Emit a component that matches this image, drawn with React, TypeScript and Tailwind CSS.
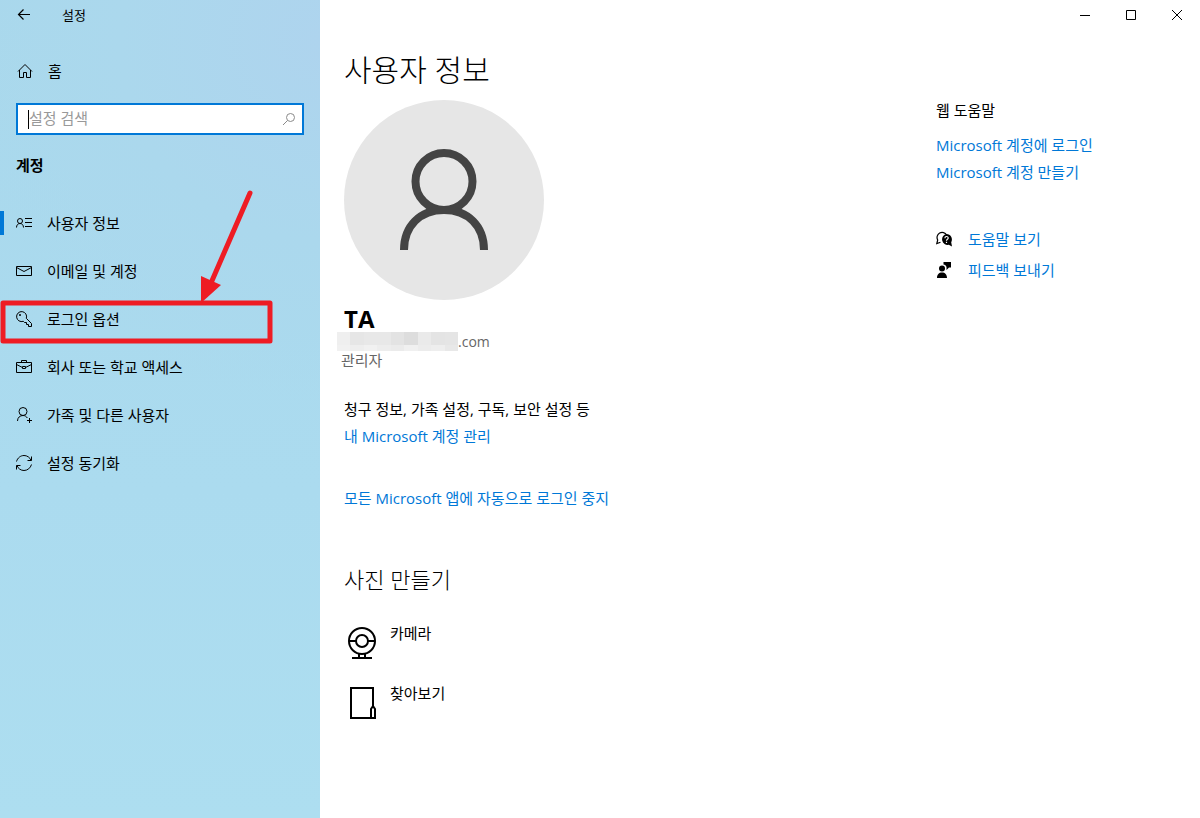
import React from 'react';

type IconProps = { className?: string };

const stroke = { fill: 'none', stroke: 'currentColor', strokeWidth: 1 } as const;

function PersonCardIcon({ className }: IconProps) {
  return (
    <svg className={className} viewBox="0 0 16 16" {...stroke} aria-hidden="true">
      <circle cx="4" cy="6" r="2.5" />
      <path d="M0.5 12.5C0.5 10 2 8.5 4 8.5S7.5 10 7.5 12.5M9 3.5h7M9 7.5h7M9 11.5h7" />
    </svg>
  );
}

function MailIcon({ className }: IconProps) {
  return (
    <svg className={className} viewBox="0 0 16 16" {...stroke} aria-hidden="true">
      <path d="M0.5 3.5h15v9h-15zM0.5 4.5L8 8.5l7.5-4" />
    </svg>
  );
}

function KeyIcon({ className }: IconProps) {
  return (
    <svg className={className} viewBox="0 0 16 16" {...stroke} aria-hidden="true">
      <path d="M10.3 7.3L15.5 12.5v3h-3v-2h-2v-2h-2L7.3 10.3A5 5 0 1 1 10.3 7.3z" />
      <circle cx="4" cy="4" r="0.6" fill="currentColor" />
    </svg>
  );
}

function BriefcaseIcon({ className }: IconProps) {
  return (
    <svg className={className} viewBox="0 0 16 16" {...stroke} aria-hidden="true">
      <path d="M0.5 3.5h15v10h-15zM5.5 3.5v-2h5v2M0.5 5.5L6.5 8.5M9.5 8.5L15.5 5.5M6.5 7.5h3v2h-3z" />
    </svg>
  );
}

function PersonAddIcon({ className }: IconProps) {
  return (
    <svg className={className} viewBox="0 0 16 16" {...stroke} aria-hidden="true">
      <circle cx="7" cy="4.5" r="4" />
      <path d="M1.5 14C1.5 10.5 4 8.5 7 8.5c2 0 3.500 1 4.300 2.500M13.500 11v5M11 13.500h5" />
    </svg>
  );
}

function SyncIcon({ className }: IconProps) {
  return (
    <svg className={className} viewBox="0 0 16 16" {...stroke} aria-hidden="true">
      <path d="M0.500 6.500C1.500 3 4.500 .5 8 .5c3.200 0 5.900 2 7 4.800M15.500 1.500v4h-4M15.500 9.500C14.500 13 11.500 15.500 8 15.500c-3.200 0-5.900-2-7-4.800M0.500 14.500v-4h4" />
    </svg>
  );
}

function HomeIcon({ className }: IconProps) {
  return (
    <svg className={className} viewBox="0 0 16 16" {...stroke} aria-hidden="true">
      <path d="M1 8.500L8 1.500l7 7M2.500 7v7.500h4v-5h3v5h4V7" />
    </svg>
  );
}

function SearchIcon({ className }: IconProps) {
  return (
    <svg className={className} viewBox="0 0 16 16" {...stroke} aria-hidden="true">
      <circle cx="9.500" cy="6.500" r="4" />
      <path d="M6.500 9.500L2 14" />
    </svg>
  );
}

function HelpIcon({ className }: IconProps) {
  return (
    <svg className={className} viewBox="0 0 16 16" aria-hidden="true">
      <path d="M4.500 11.200L0.800 12.500 1.700 9A5 5 0 1 1 10.600 4" fill="none" stroke="currentColor" strokeWidth="1.200" />
      <path d="M10.500 3a5.500 5.500 0 0 1 4.700 8.200l.8 4.300-3.300-1.700A5.500 5.500 0 1 1 10.500 3z" fill="currentColor" />
      <path d="M8.900 7.200c0-2.200 3.300-2.200 3.300-.2 0 1.300-1.700 1.300-1.700 2.700M10.500 10.700v1.200" fill="none" stroke="white" strokeWidth="1.200" />
    </svg>
  );
}

function FeedbackIcon({ className }: IconProps) {
  return (
    <svg className={className} viewBox="0 0 16 16" fill="currentColor" aria-hidden="true">
      <circle cx="6" cy="6.500" r="3" />
      <path d="M1 16c0-3.500 2-5.500 5-5.500s5 2 5 5.500zM7.500 0H15v5.500h-2L10.500 8V5C10 3.500 9 2.700 7.500 2.500z" />
    </svg>
  );
}

function WebcamIcon({ className }: IconProps) {
  return (
    <svg className={className} viewBox="0 0 32 32" fill="none" stroke="currentColor" strokeWidth="2" aria-hidden="true">
      <circle cx="16" cy="14" r="13" />
      <circle cx="16" cy="14" r="6" />
      <path d="M3 14h7M22 14h7M13 27v4M19 27v4M6 31h20" />
    </svg>
  );
}

function BrowseIcon({ className }: IconProps) {
  return (
    <svg className={className} viewBox="0 0 32 32" fill="none" stroke="currentColor" strokeWidth="2" aria-hidden="true">
      <path d="M25 31H5V1h22v19M25 31v-9l2-3 2 3v9z" />
    </svg>
  );
}

const navItems = [
  { label: '사용자 정보', Icon: PersonCardIcon },
  { label: '이메일 및 계정', Icon: MailIcon },
  { label: '로그인 옵션', Icon: KeyIcon },
  { label: '회사 또는 학교 액세스', Icon: BriefcaseIcon },
  { label: '가족 및 다른 사용자', Icon: PersonAddIcon },
  { label: '설정 동기화', Icon: SyncIcon },
];

const mosaic = [
  'bg-[#efefef]', 'bg-[#e6e6e6]', 'bg-[#e8e8e8]', 'bg-[#e8e8e8]', 'bg-[#e3e3e3]',
  'bg-[#dddddd]', 'bg-[#eaeaea]', 'bg-[#e4e4e4]', 'bg-[#e5e5e5]',
  'bg-[#f1f1f1]', 'bg-[#eeeeee]', 'bg-[#f1f1f1]', 'bg-[#ededed]', 'bg-[#ebebeb]',
  'bg-[#f0f0f0]', 'bg-[#ececec]', 'bg-[#eeeeee]', 'bg-[#e8e8e8]',
];

function Sidebar() {
  return (
    <aside className="relative w-80 shrink-0 bg-[#abdaee] bg-[radial-gradient(circle_at_100%_5%,#aed4ee_0%,#abd8ed_200px,transparent_360px),linear-gradient(to_bottom,#a9d8ec,#abdbef_60%,#addef0)]">
      <header className="flex h-[30px] items-center">
        <button type="button" aria-label="뒤로" className="flex h-[30px] w-12 items-center justify-center">
          <svg className="h-4 w-4" viewBox="0 0 16 16" {...stroke} strokeWidth="1.200" aria-hidden="true">
            <path d="M14 7.500H2.500M7.500 2.500l-5 5 5 5" />
          </svg>
        </button>
        <span className="pl-[14px] text-[13px]">설정</span>
      </header>
      <a href="#home" className="mt-[25px] flex h-8 items-center gap-[15px] pl-[17px]">
        <HomeIcon className="h-4 w-4" />
        <span>홈</span>
      </a>
      <div className="mx-4 mt-4 flex h-8 items-center border-2 border-[#0078d7] bg-white pl-[10px] pr-[5px]">
        <span className="h-[19px] w-px bg-black" />
        <input type="text" aria-label="설정 검색" placeholder="설정 검색" className="min-w-0 flex-1 bg-transparent pb-[2px] outline-none placeholder:text-[#999999]" />
        <SearchIcon className="h-4 w-4 text-[#8a8a8a]" />
      </div>
      <h2 className="mt-[18px] pl-4 leading-6 font-bold">계정</h2>
      <nav className="mt-[22px]">
        <ul>
          {navItems.map(({ label, Icon }, index) => (
            <li key={label}>
              <a href={`#section-${index}`} aria-current={index === 0 ? 'page' : undefined} className="flex h-12 items-center">
                <span className={index === 0 ? 'h-6 w-1 bg-[#0078d7]' : 'h-6 w-1'} />
                <Icon className="ml-3 h-4 w-4" />
                <span className="ml-[15px]">{label}</span>
              </a>
            </li>
          ))}
        </ul>
      </nav>
      <svg className="pointer-events-none absolute top-[184px] left-0 h-[164px] w-[280px]" viewBox="0 0 280 164" aria-hidden="true">
        <rect x="3" y="119" width="267" height="38" fill="none" stroke="#ee1c24" strokeWidth="5" strokeLinejoin="round" />
        <path d="M250 9L211 99" stroke="#ee1c24" strokeWidth="5" strokeLinecap="round" />
        <path d="M201 92L221 101L201 119z" fill="#ee1c24" />
      </svg>
    </aside>
  );
}

export default function App() {
  return (
    <div className="flex min-h-screen bg-white font-['Open_Sans','Noto_Sans_CJK_KR',sans-serif] text-[15px] leading-5 text-black">
      <Sidebar />
      <div className="flex min-w-0 flex-1 flex-col">
        <header className="flex h-[30px] justify-end">
          <button type="button" aria-label="최소화" className="flex w-[46px] items-center justify-center">
            <svg className="h-[10px] w-[10px]" viewBox="0 0 10 10" {...stroke}><path d="M0 5.500h10" /></svg>
          </button>
          <button type="button" aria-label="최대화" className="flex w-[46px] items-center justify-center">
            <svg className="h-[10px] w-[10px]" viewBox="0 0 10 10" {...stroke}><path d="M0.500 .5h9v9h-9z" /></svg>
          </button>
          <button type="button" aria-label="닫기" className="flex w-[46px] items-center justify-center">
            <svg className="h-[10px] w-[10px]" viewBox="0 0 10 10" {...stroke}><path d="M0 0l10 10M10 0L0 10" /></svg>
          </button>
        </header>
        <div className="flex flex-1 justify-between pl-6">
          <main className="pt-5">
            <h1 className="text-[30px] leading-10 font-light">사용자 정보</h1>
            <svg className="mt-[10px] h-[200px] w-[200px]" viewBox="0 0 200 200" role="img" aria-label="프로필 사진">
              <circle cx="100" cy="100" r="100" fill="#e6e6e6" />
              <g fill="none" stroke="#444444" strokeWidth="8">
                <circle cx="100" cy="81.500" r="28.500" />
                <path d="M60 150C60 126 76 110 100 110s40 16 40 40" />
              </g>
            </svg>
            <p className="mt-[6px] text-2xl leading-[26px] font-bold">TA</p>
            <div className="-ml-[7px] flex h-5 items-start text-[#666666]">
              <span className="grid h-[19px] w-[121px] grid-cols-9 grid-rows-[13px_6px]">
                {mosaic.map((tone, index) => <span key={index} className={tone} />)}
              </span>
              <span className="text-sm leading-5">.com</span>
            </div>
            <p className="-ml-[3px] leading-4 text-[#666666]">관리자</p>
            <p className="mt-[31px]">청구 정보, 가족 설정, 구독, 보안 설정 등</p>
            <a href="#manage" className="mt-[7px] block text-[#0078d7]">내 Microsoft 계정 관리</a>
            <a href="#stop" className="mt-[42px] block text-[#0078d7]">모든 Microsoft 앱에 자동으로 로그인 중지</a>
            <h2 className="mt-[55px] text-[22px] leading-8 font-light">사진 만들기</h2>
            <button type="button" className="mt-7 flex h-9 items-start gap-3 pl-[2px] text-left">
              <WebcamIcon className="mt-1 h-8 w-8" />
              <span>카메라</span>
            </button>
            <button type="button" className="mt-6 flex h-9 items-start gap-3 pl-[2px] text-left">
              <BrowseIcon className="mt-1 h-8 w-8" />
              <span>찾아보기</span>
            </button>
          </main>
          <aside className="w-[264px] shrink-0 pt-[70px]">
            <h2>웹 도움말</h2>
            <a href="#sign-in" className="mt-[15px] block text-[#0078d7]">Microsoft 계정에 로그인</a>
            <a href="#create" className="mt-[7px] block text-[#0078d7]">Microsoft 계정 만들기</a>
            <a href="#help" className="mt-[47px] flex items-center gap-4 text-[#0078d7]">
              <HelpIcon className="h-4 w-4 text-black" />
              <span>도움말 보기</span>
            </a>
            <a href="#feedback" className="mt-[11px] flex items-center gap-4 text-[#0078d7]">
              <FeedbackIcon className="h-4 w-4 text-black" />
              <span>피드백 보내기</span>
            </a>
          </aside>
        </div>
      </div>
    </div>
  );
}
